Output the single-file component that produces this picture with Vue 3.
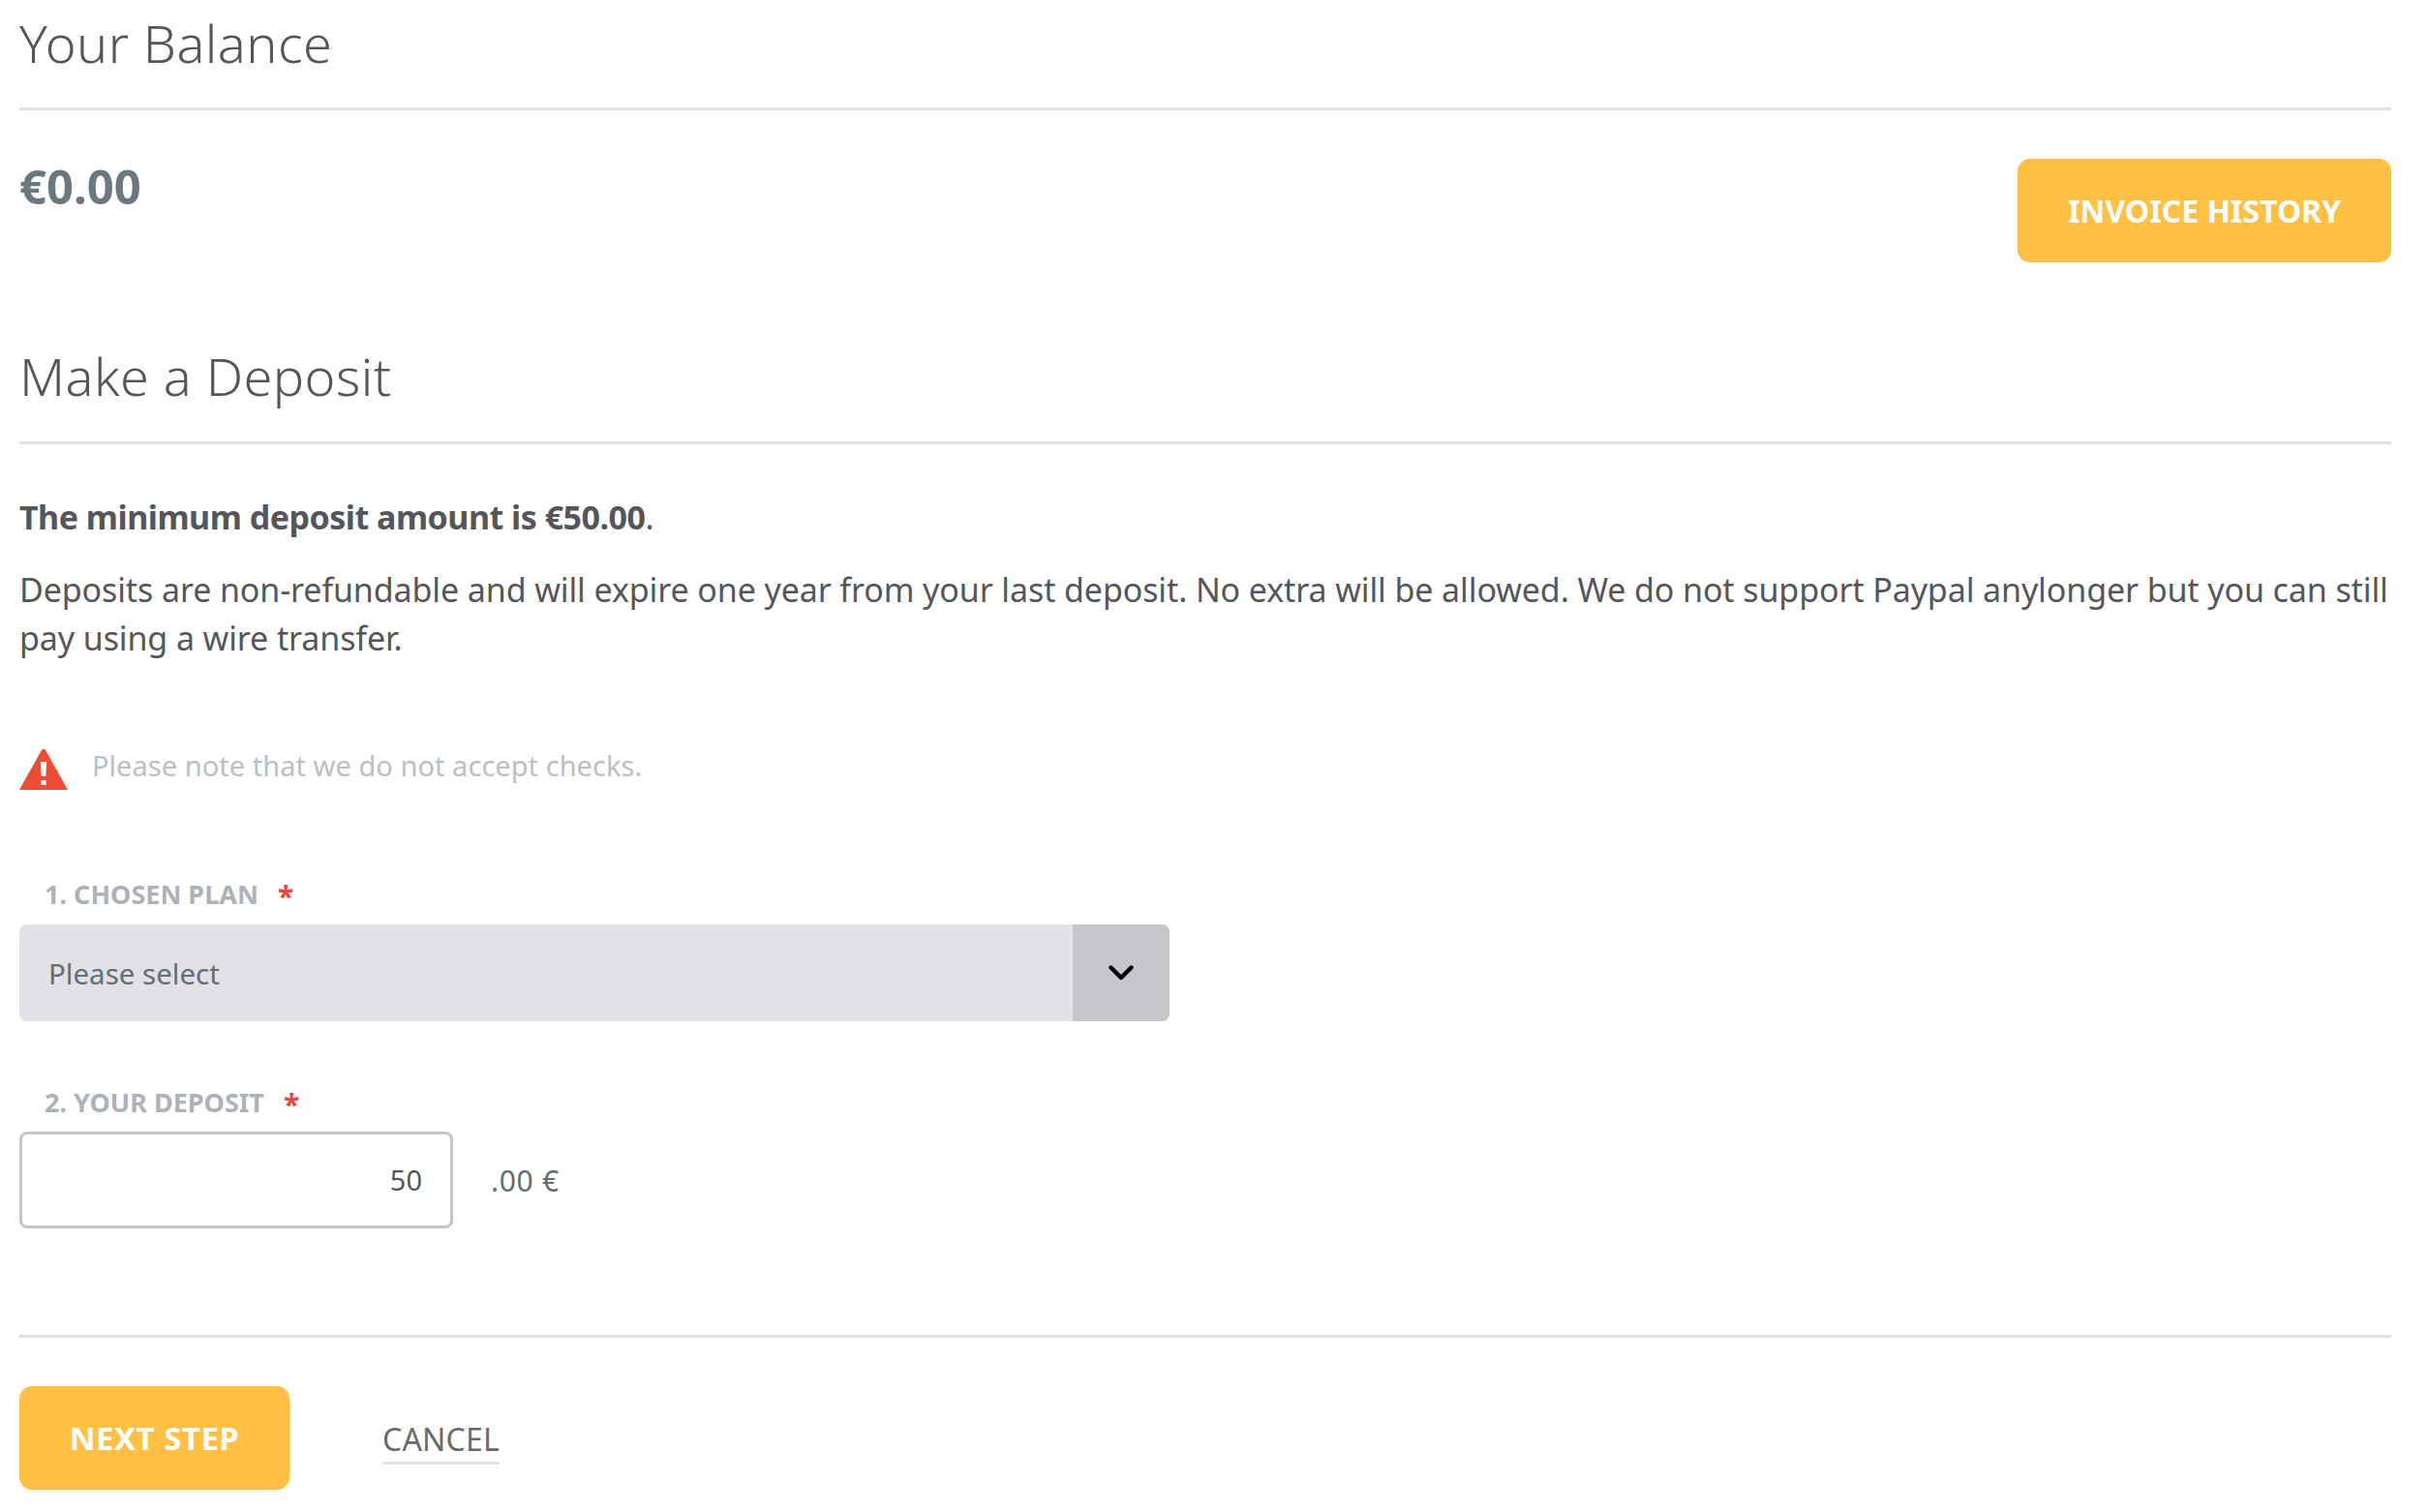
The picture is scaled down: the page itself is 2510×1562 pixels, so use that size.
<script setup>
const required = '*'
</script>

<template>
  <div class="page">
    <section class="head">
      <h1 class="title">Your Balance</h1>
    </section>
    <section class="balance">
      <div class="amount">€0.00</div>
      <button class="btn btn-invoice">INVOICE HISTORY</button>
    </section>
    <section class="head head-deposit">
      <h2 class="title">Make a Deposit</h2>
    </section>
    <p class="min"><strong>The minimum deposit amount is €50.00</strong>.</p>
    <p class="info">Deposits are non-refundable and will expire one year from your last deposit. No extra will be allowed. We do not support Paypal anylonger but you can still pay using a wire transfer.</p>
    <div class="note">
      <svg class="warn" viewBox="0 0 50 43" aria-hidden="true">
        <path d="M22.8 2.2 Q25 -1 27.2 2.2 L50 43 L0 43 Z" fill="#ef4c35" />
        <path d="M21.8 14 h6.4 l-1 15 h-4.4 z" fill="#fff" />
        <rect x="22.5" y="33" width="5" height="5" fill="#fff" />
      </svg>
      <span>Please note that we do not accept checks.</span>
    </div>
    <label class="label label-plan">1. CHOSEN PLAN<span class="req">{{ required }}</span></label>
    <div class="select">
      <span class="select-text">Please select</span>
      <span class="select-arrow">
        <svg viewBox="0 0 26 16" width="26" height="16" aria-hidden="true">
          <path d="M2.5 2.5 L13 13 L23.5 2.5" fill="none" stroke="#000" stroke-width="4.4" stroke-linecap="round" stroke-linejoin="round" />
        </svg>
      </span>
    </div>
    <label class="label label-deposit">2. YOUR DEPOSIT<span class="req">{{ required }}</span></label>
    <div class="deposit">
      <div class="input">50</div>
      <span class="cents">.00 €</span>
    </div>
    <div class="actions">
      <button class="btn btn-next">NEXT STEP</button>
      <a class="cancel">CANCEL</a>
    </div>
  </div>
</template>

<style>
html, body { background: #fff; }
</style>

<style scoped>
.page {
  width: 2510px;
  height: 1562px;
  box-sizing: border-box;
  padding: 0 40px 0 20px;
  font-family: "Noto Sans", sans-serif;
  color: #55565a;
  overflow: hidden;
}
.head {
  height: 114px;
  border-bottom: 3px solid #e0e0e5;
  box-sizing: border-box;
}
.title {
  margin: 0;
  font-size: 54px;
  line-height: 88px;
  font-weight: 350;
  letter-spacing: 0.45px;
  color: #55565c;
}
.balance {
  height: 230px;
  display: flex;
  justify-content: space-between;
  align-items: flex-start;
  padding-top: 50px;
  box-sizing: border-box;
}
.amount {
  font-size: 49px;
  line-height: 92px;
  margin-top: -18px;
  font-weight: 700;
  color: #6a7880;
}
.btn {
  border: 0;
  border-radius: 13px;
  background: #ffc043;
  color: #fff;
  font-family: inherit;
  font-weight: 700;
  font-size: 32px;
  height: 107px;
  padding: 0;
}
.btn-invoice { width: 386px; }
.head-deposit {
  height: 115px;
  padding-top: 0;
}
.min {
  margin: 50px 0 0;
  font-size: 34px;
  line-height: 50px;
  letter-spacing: -0.5px;
}
.info {
  margin: 25px 0 0;
  font-size: 34px;
  line-height: 50px;
  letter-spacing: -0.11px;
}
.note {
  margin-top: 89px;
  display: flex;
  align-items: center;
  gap: 25px;
  font-size: 29px;
  line-height: 43px;
  letter-spacing: 0.04px;
  color: #bbbfc3;
}
.note span { position: relative; top: -4px; }
.warn { width: 50px; height: 43px; flex: none; }
.label {
  display: block;
  margin-left: 26px;
  font-size: 27px;
  line-height: 33px;
  font-weight: 700;
  color: #adb1b8;
}
.label-plan { margin-top: 90px; height: 49px; }
.label-deposit { margin-top: 66px; height: 48px; }
.req {
  position: relative;
  top: 3px;
  color: #ef4438;
  margin-left: 20px;
  font-size: 30px;
}
.select {
  width: 1188px;
  height: 100px;
  background: #e1e1e6;
  border-radius: 8px;
  display: flex;
  justify-content: space-between;
  align-items: center;
  overflow: hidden;
}
.select-text {
  margin-left: 30px;
  font-size: 29.5px;
  color: #646e73;
}
.select-arrow {
  width: 100px;
  height: 100px;
  background: #c7c7cb;
  display: flex;
  align-items: center;
  justify-content: center;
}
.deposit {
  display: flex;
  align-items: center;
  gap: 40px;
}
.input {
  width: 448px;
  height: 100px;
  box-sizing: border-box;
  border: 3px solid #c6c6ca;
  border-radius: 8px;
  text-align: right;
  padding-right: 29px;
  font-size: 29px;
  line-height: 94px;
  color: #55565a;
}
.cents {
  font-size: 30px;
  letter-spacing: 0.7px;
  margin-left: -1px;
  color: #646e73;
}
.actions {
  margin-top: 110px;
  border-top: 3px solid #e0e0e5;
  padding-top: 50px;
  display: flex;
  align-items: flex-start;
  gap: 96px;
}
.btn-next { width: 279px; font-size: 33px; letter-spacing: 0.5px; }
.cancel {
  margin-top: 35px;
  font-size: 32px;
  letter-spacing: 0.2px;
  line-height: 40px;
  height: 43px;
  color: #6a6a6a;
  border-bottom: 3px solid #e0e0e5;
}
</style>
